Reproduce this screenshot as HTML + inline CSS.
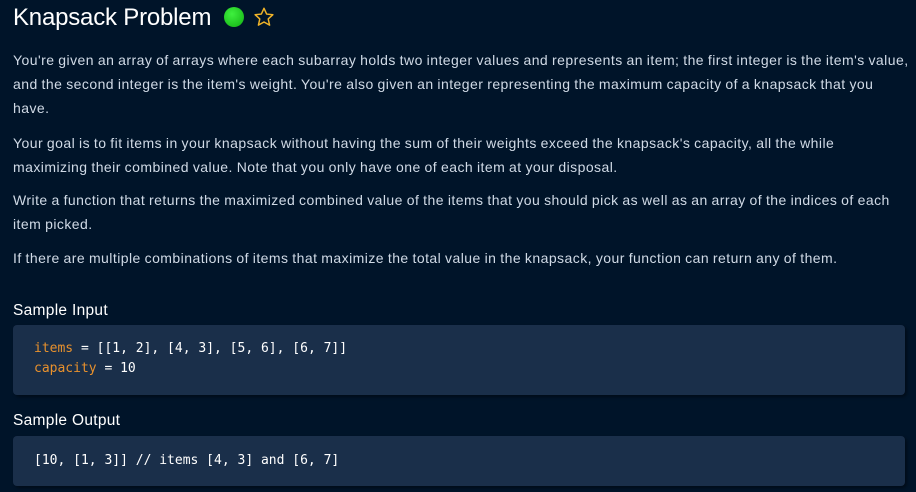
<!DOCTYPE html>
<html><head><style>
html,body{margin:0;padding:0;background:#001429;width:916px;height:492px;overflow:hidden}
body{font-family:"Liberation Sans","DejaVu Sans",sans-serif;color:#d0dae6}
h1{position:absolute;left:13px;top:3px;margin:0;font-size:24px;font-weight:normal;color:#fff;line-height:30px;letter-spacing:-0.2px}
.dot{position:absolute;left:224px;top:7px;width:20px;height:20px;border-radius:50%;background:radial-gradient(circle at 40% 35%,#3ef03e,#12b012)}
.star{position:absolute;left:253px;top:6px}
p{position:absolute;left:13px;margin:0;font-size:14px;line-height:24px;width:900px;letter-spacing:0.45px;word-spacing:-0.5px;white-space:nowrap}
h2{position:absolute;left:13px;margin:0;font-size:15.5px;font-weight:normal;color:#fff;letter-spacing:0.3px}
.code{position:absolute;left:13px;width:892px;background:#1a2f4a;border-radius:4px;font-family:"DejaVu Sans Mono","Liberation Mono",monospace;font-size:13px;line-height:20px;color:#fff;box-shadow:2px 2px 3px rgba(0,0,0,.4)}
.code div{padding-left:21px}
.o{color:#e8912d}
</style></head><body>
<h1>Knapsack Problem</h1>
<div class="dot"></div>
<svg class="star" width="22" height="22" viewBox="0 0 24 24"><path d="M12 2.5l2.9 6.3 6.8.7-5.1 4.6 1.5 6.8L12 17.4l-6.1 3.5 1.5-6.8-5.1-4.6 6.8-.7z" fill="none" stroke="#f0b429" stroke-width="1.6" stroke-linejoin="round"/></svg>
<p style="top:48px">You're given an array of arrays where each subarray holds two integer values and represents an item; the first integer is the item's value,<br>and the second integer is the item's weight. You're also given an integer representing the maximum capacity of a knapsack that you<br>have.</p>
<p style="top:131px">Your goal is to fit items in your knapsack without having the sum of their weights exceed the knapsack's capacity, all the while<br>maximizing their combined value. Note that you only have one of each item at your disposal.</p>
<p style="top:188px">Write a function that returns the maximized combined value of the items that you should pick as well as an array of the indices of each<br>item picked.</p>
<p style="top:246px">If there are multiple combinations of items that maximize the total value in the knapsack, your function can return any of them.</p>
<h2 style="top:302px">Sample Input</h2>
<div class="code" style="top:325px;height:70px"><div style="padding-top:14px"><span class="o">items</span> = [[1, 2], [4, 3], [5, 6], [6, 7]]</div><div><span class="o">capacity</span> = 10</div></div>
<h2 style="top:412px">Sample Output</h2>
<div class="code" style="top:436px;height:50px"><div style="padding-top:15px">[10, [1, 3]] // items [4, 3] and [6, 7]</div></div>
</body></html>
